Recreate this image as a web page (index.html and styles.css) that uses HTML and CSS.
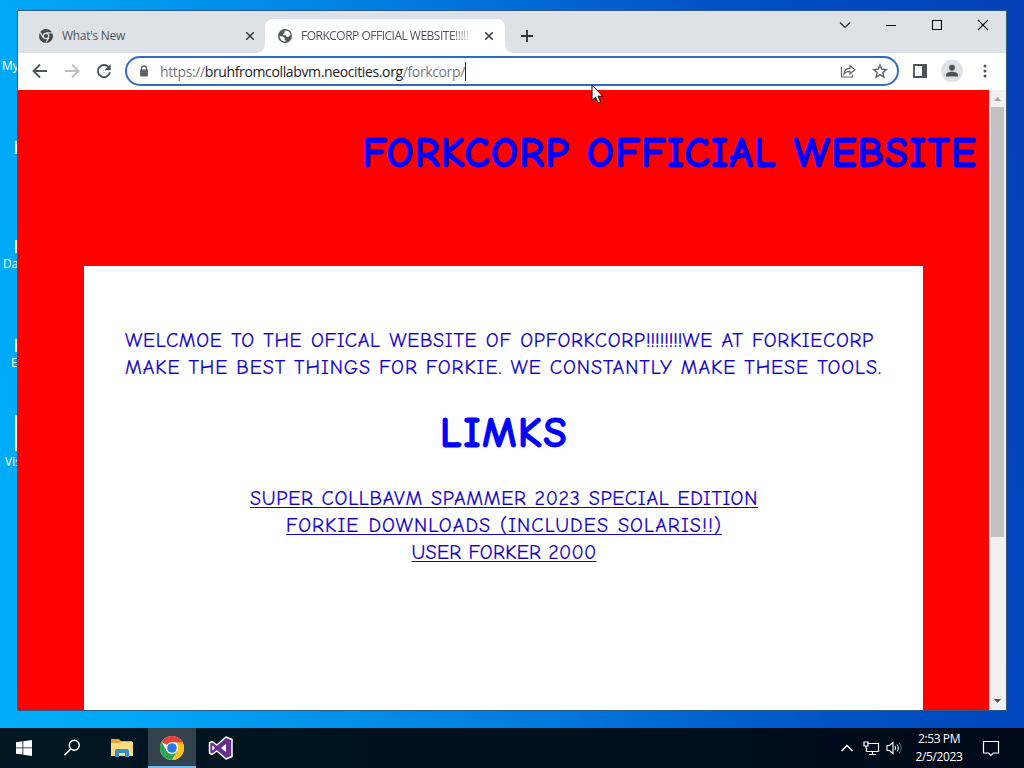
FILE: index.html
```html
<!DOCTYPE html>
<html lang="en">
<head>
    <meta charset="UTF-8">
    <meta name="viewport" content="width=device-width, initial-scale=1.0">
    <title>FORKCORP OFFICIAL WEBSITE</title>
    <link rel="stylesheet" href="styles.css">
</head>
<body>
    <div class="desktop">
        <!-- desktop shortcuts, mostly behind the window -->
        <span class="shortcut shortcut-my">My</span>
        <span class="shortcut shortcut-da">Da</span>
        <span class="shortcut shortcut-e">E</span>
        <span class="shortcut shortcut-vis">Vis</span>
        <i class="arrow arrow-1"></i>
        <i class="arrow arrow-2"></i>
        <i class="arrow arrow-3"></i>
        <i class="arrow arrow-4"></i>

        <div class="window">
            <div class="titlebar">
                <div class="tab">
                    <svg class="favicon" width="14" height="14" viewBox="0 0 14 14">
                        <circle cx="7" cy="7" r="7" fill="#45494d"/>
                        <circle cx="7" cy="7" r="2.7" fill="#45494d" stroke="#dee1e6" stroke-width="1.2"/>
                        <path d="M7 3.8h6.2M4.2 8.6L1.2 3.4M9.8 8.6l-3 5.2" stroke="#dee1e6" stroke-width="1.2" fill="none"/>
                    </svg>
                    <span class="tab-title">What's New</span>
                    <svg width="10" height="10" viewBox="0 0 10 10"><path d="M1.2 1.2l7.6 7.6M8.8 1.2L1.2 8.8" stroke="#3c4043" stroke-width="1.6"/></svg>
                </div>
                <div class="tab active">
                    <svg class="favicon" width="14" height="14" viewBox="0 0 14 14">
                        <circle cx="7" cy="7" r="7" fill="#55595d"/>
                        <path d="M7.8 1.5L6.2 3l.4 1.3-1.8.6.3 1.4h2.6l.9 1.4 1.900.2.9-1.200 1.200-.2A5.500 5.500 0 0 0 7.800 1.500zM1.500 7.300l3.300.2 2 1.600-.3 1.400 1.200.9-.3 1.100A5.500 5.500 0 0 1 1.500 7.300z" fill="#fff"/>
                    </svg>
                    <span class="tab-title fade">FORKCORP OFFICIAL WEBSITE!!!!!</span>
                    <svg width="10" height="10" viewBox="0 0 10 10"><path d="M1.2 1.2l7.6 7.6M8.8 1.2L1.2 8.8" stroke="#3c4043" stroke-width="1.6"/></svg>
                </div>
                <svg class="new-tab" width="12" height="12" viewBox="0 0 12 12"><path d="M6 0v12M0 6h12" stroke="#2f3235" stroke-width="1.8"/></svg>
                <div class="controls">
                    <svg width="12" height="12" viewBox="0 0 12 12"><path d="M1 3.5l5 5 5-5" stroke="#222" stroke-width="1.1" fill="none"/></svg>
                    <svg width="12" height="12" viewBox="0 0 12 12"><path d="M1 6.5h10" stroke="#111" fill="none"/></svg>
                    <svg width="12" height="12" viewBox="0 0 12 12"><path d="M1.5 1.5h9v9h-9z" stroke="#111" stroke-width="1.1" fill="none"/></svg>
                    <svg width="12" height="12" viewBox="0 0 12 12"><path d="M1 1l10 10M11 1L1 11" stroke="#111" stroke-width="1.1" fill="none"/></svg>
                </div>
            </div>

            <div class="toolbar">
                <div class="nav">
                    <svg width="16" height="16" viewBox="0 0 16 16"><path d="M15 8H2M8 1.5L1.5 8 8 14.5" stroke="#4f5357" stroke-width="1.8" fill="none"/></svg>
                    <svg width="16" height="16" viewBox="0 0 16 16"><path d="M1 8h13M8 1.5L14.5 8 8 14.5" stroke="#bcbec1" stroke-width="1.8" fill="none"/></svg>
                    <svg width="16" height="16" viewBox="0 0 16 16"><path d="M13.3 5A6.1 6.1 0 1 0 14 9.3" stroke="#4f5357" stroke-width="1.9" fill="none"/><path d="M14.7 1v6.2H8.5z" fill="#4f5357"/></svg>
                </div>
                <div class="address">
                    <svg class="lock" width="10" height="12" viewBox="0 0 10 12"><path d="M2.5 5V3.5a2.5 2.5 0 0 1 5 0V5" stroke="#5f6368" stroke-width="1.3" fill="none"/><rect x="1" y="4.5" width="8" height="7" rx="1" fill="#5f6368"/></svg>
                    <span class="url">https://<b>bruhfromcollabvm.neocities.org</b>/forkcorp/</span>
                    <i class="caret"></i>
                    <svg class="share" width="16" height="14" viewBox="0 0 16 14"><path d="M1.5 3v10h11v-2.5M4 10c.2-4 2.2-5.7 6-5.8V1.5l4.8 4.3L10 10V7.3C7.3 7.2 5.5 8 4 10z" stroke="#5f6368" stroke-width="1.2" fill="none"/></svg>
                    <svg width="16" height="16" viewBox="0 0 16 16"><path d="M8 2l1.7 4.3 4.6.3-3.5 3 1.1 4.5L8 11.6l-3.9 2.5 1.1-4.5-3.5-3 4.6-.3z" stroke="#5f6368" stroke-width="1.4" fill="none"/></svg>
                </div>
                <svg class="panel" width="14" height="14" viewBox="0 0 14 14"><path d="M1 1h12v12H1z" stroke="#4f5357" stroke-width="1.8" fill="none"/><path d="M9 0h5v14H9z" fill="#4f5357"/></svg>
                <svg class="profile" width="22" height="22" viewBox="0 0 22 22"><circle cx="11" cy="11" r="11" fill="#dee1e6"/><circle cx="11" cy="7.7" r="3" fill="#4f5357"/><path d="M5 16.5v-1.5c0-2 3-3.2 6-3.2s6 1.2 6 3.2v1.5z" fill="#4f5357"/></svg>
                <svg width="4" height="14" viewBox="0 0 4 14" fill="#4f5357"><circle cx="2" cy="2" r="1.5"/><circle cx="2" cy="7" r="1.5"/><circle cx="2" cy="12" r="1.5"/></svg>
            </div>

            <div class="viewport">
                <div class="page">
                    <h1 class="site-title">FORKCORP OFFICIAL WEBSITE</h1>
                    <div class="content">
                        <p class="intro">
                            <span class="line line-1">WELCMOE TO THE OFICAL WEBSITE OF OPFORKCORP<span class="bangs">!!!!!!!!</span>WE AT FORKIECORP</span>
                            <span class="line line-2">MAKE THE BEST THINGS FOR FORKIE. WE CONSTANTLY MAKE THESE TOOLS.</span>
                        </p>
                        <h1 class="links-title">LIMKS</h1>
                        <div class="links">
                            <a class="line link-1" href="#">SUPER COLLBAVM SPAMMER 2023 SPECIAL EDITION</a>
                            <a class="line link-2" href="#">FORKIE DOWNLOADS (INCLUDES SOLARIS!!)</a>
                            <a class="line link-3" href="#">USER FORKER 2000</a>
                        </div>
                    </div>
                </div>
                <div class="scrollbar">
                    <svg width="17" height="17" viewBox="0 0 17 17"><path d="M5 11l3.5-4 3.5 4z" fill="#a3a3a3"/></svg>
                    <div class="thumb"></div>
                    <svg width="17" height="17" viewBox="0 0 17 17"><path d="M5 6l3.5 4L12 6z" fill="#505050"/></svg>
                </div>
            </div>
        </div>

        <svg class="cursor" width="13" height="20" viewBox="0 0 13 20"><path d="M1 1v15.5l3.6-3.4 2.6 5.7 2.4-1.1L7 12.2h4.8z" fill="#fff" stroke="#000"/></svg>

        <div class="taskbar">
            <div class="task start">
                <svg width="16" height="16" viewBox="0 0 16 16" fill="#fff"><path d="M0 2.2L6.5 1.3v6.2H0zM7.3 1.2L16 0v7.5H7.3zM0 8.3h6.5v6.2L0 13.7zM7.3 8.3H16V16l-8.7-1.2z"/></svg>
            </div>
            <div class="task search">
                <svg width="18" height="18" viewBox="0 0 18 18"><circle cx="11.3" cy="6.3" r="5" stroke="#fff" stroke-width="1.4" fill="none"/><path d="M7.7 9.9L1.5 16.2" stroke="#fff" stroke-width="1.5"/></svg>
            </div>
            <div class="task files">
                <svg width="22" height="18" viewBox="0 0 22 18"><path d="M0 0h8l2 2h11v3H0z" fill="#e3a82b"/><path d="M0 4h8l1.5-1H22v14H0z" fill="#fcdc7c"/><path d="M4 18v-6.5L5.5 10h11l1.5 1.5V18h-4v-4H8v4z" fill="#3b8fc9"/></svg>
            </div>
            <div class="task running">
                <svg width="24" height="24" viewBox="0 0 24 24"><circle cx="12" cy="12" r="12" fill="#fff"/><path d="M12 12L1.6 6A12 12 0 0 1 22.4 6H12z" fill="#ea4335"/><path d="M22.4 6A12 12 0 0 1 12 24l5.2-9V6z" fill="#fbc116"/><path d="M1.6 6A12 12 0 0 0 12 24l5.2-9H6.8z" fill="#30a350"/><path d="M12 6h10.4" stroke="#ea4335"/><circle cx="12" cy="12" r="6" fill="#fff"/><circle cx="12" cy="12" r="4.8" fill="#2878e8"/></svg>
            </div>
            <div class="task">
                <svg width="26" height="24" viewBox="0 0 26 24"><path d="M18 1l6 2.5v17L18 23l-9.2-8L4 18.5 1.5 17V7L4 5.5 8.8 9z" fill="#65308c" stroke="#fff" stroke-width="1.5" stroke-linejoin="round"/><path d="M18 8l-5 4 5 4zM4.3 9.2v5.6L7 12z" fill="#fff"/></svg>
            </div>

            <div class="tray">
                <svg width="14" height="14" viewBox="0 0 14 14"><path d="M1.5 10L7 4.5l5.5 5.5" stroke="#fff" stroke-width="1.4" fill="none"/></svg>
                <svg class="network" width="17" height="15" viewBox="0 0 17 15"><path d="M5.5 2.5h10v8h-12V7M9.5 10.5v3M6 13.5h7M1 1h4v4H1zM3 5v2.5" stroke="#fff" stroke-width="1.2" fill="none"/></svg>
                <svg class="volume" width="17" height="14" viewBox="0 0 17 14"><path d="M1 4.5h2.5L7 1.5v11l-3.5-3H1zM9 5q1.3 2 0 4M11 3.5q2.6 3.5 0 7" stroke="#fff" stroke-width="1.1" fill="none"/><path d="M13.2 2q4 5 0 10" stroke="#66717c" fill="none"/></svg>
                <div class="clock">
                    <div>2:53 PM</div>
                    <div>2/5/2023</div>
                </div>
                <svg class="action" width="18" height="18" viewBox="0 0 18 18"><path d="M1.5 2.5h15v11.5H11.5L9 16.5 6.5 14h-5z" stroke="#fff" stroke-width="1.2" fill="none"/></svg>
            </div>
        </div>
    </div>
</body>
</html>
```
FILE: styles.css
```css
* {
    box-sizing: border-box;
}

body {
    margin: 0;
    font-family: "Open Sans", "Noto Sans", sans-serif;
}

svg {
    display: block;
    flex-shrink: 0;
}

.desktop {
    position: relative;
    width: 1024px;
    height: 768px;
    overflow: hidden;
    background: linear-gradient(80deg, #00aef8 0%, #00a6f5 14%, #007de0 45%, #0050c4 74%, #0540b8 100%);
}

.shortcut {
    position: absolute;
    font-size: 12px;
    line-height: 16px;
    color: #fff;
}

.shortcut-my {
    left: 2px;
    top: 58px;
}

.shortcut-da {
    left: 3px;
    top: 256px;
}

.shortcut-e {
    left: 11px;
    top: 355px;
}

.shortcut-vis {
    left: 5px;
    top: 454px;
}

.arrow {
    position: absolute;
    left: 15px;
    width: 2px;
    height: 13px;
    background: #fff;
}

.arrow-1 {
    top: 141px;
}

.arrow-2 {
    top: 240px;
}

.arrow-3 {
    top: 339px;
}

.arrow-4 {
    top: 415px;
    height: 36px;
}

.window {
    position: absolute;
    left: 17px;
    top: 10px;
    width: 990px;
    height: 701px;
    display: flex;
    flex-direction: column;
    border: 1px solid #2b5a86;
    background: #fff;
}

.titlebar {
    display: flex;
    height: 42px;
    padding-top: 8px;
    background: #dee1e6;
}

.tab {
    display: flex;
    align-items: center;
    width: 247px;
    padding: 0 10px 0 21px;
    font-size: 12px;
    color: #50555b;
}

.tab-title {
    flex: 1;
    margin: 0 10px 0 9px;
    padding-bottom: 1px;
    overflow: hidden;
    white-space: nowrap;
    letter-spacing: -0.3px;
}

.tab.active {
    position: relative;
    width: 240px;
    padding: 0 11px 0 13px;
    border-radius: 8px 8px 0 0;
    background: #fff;
}

.tab.active::before,
.tab.active::after {
    content: "";
    position: absolute;
    bottom: 0;
    width: 8px;
    height: 8px;
}

.tab.active::before {
    left: -8px;
    background: radial-gradient(circle at 0 0, transparent 7.5px, #fff 8px);
}

.tab.active::after {
    right: -8px;
    background: radial-gradient(circle at 100% 0, transparent 7.5px, #fff 8px);
}

.tab-title.fade {
    letter-spacing: -0.5px;
    mask-image: linear-gradient(to right, #000 150px, transparent 175px);
}

.new-tab {
    margin: 11px 0 0 16px;
}

.controls {
    display: flex;
    gap: 34px;
    margin: 0 17px 0 auto;
}

.toolbar {
    display: flex;
    align-items: center;
    height: 37px;
    padding: 0 19px 1px 14px;
    background: #fff;
}

.nav {
    display: flex;
    gap: 16px;
    margin-right: 13px;
}

.address {
    display: flex;
    align-items: center;
    width: 774px;
    height: 30px;
    padding: 0 9px 0 12px;
    border: 2px solid #2f6bc4;
    border-radius: 15px;
}

.url {
    margin-left: 11px;
    font-size: 14px;
    letter-spacing: -0.37px;
    white-space: nowrap;
    color: #75797e;
}

.url b {
    font-weight: normal;
    color: #202124;
}

.caret {
    width: 1px;
    height: 19px;
    background: #222;
}

.share {
    margin: 0 16px 0 auto;
}

.panel {
    margin-left: 14px;
}

.profile {
    margin: 0 auto 0 14px;
}

.viewport {
    display: flex;
    flex: 1;
    min-height: 0;
}

.page {
    width: 971px;
    overflow: hidden;
    background: #f00;
    color: #00f;
    font-family: "Comic Sans MS", "Comic Neue", "DejaVu Sans", sans-serif;
}

.site-title {
    width: 615px;
    height: 176px;
    margin: 0 12px 0 auto;
    padding-top: 33px;
    font-size: 43px;
    line-height: 60px;
    letter-spacing: 0.9px;
    white-space: nowrap;
    text-align: justify;
    text-align-last: justify;
    -webkit-text-stroke: 0.8px;
}

.content {
    width: 839px;
    height: 445px;
    margin-left: 66px;
    padding: 61px 40px 0 41px;
    background: #fff;
    font-size: 20px;
    line-height: 27px;
}

.intro {
    margin: 0;
    color: #1200c4;
}

.line {
    display: block;
    white-space: nowrap;
    text-align: justify;
    text-align-last: justify;
    letter-spacing: 0.7px;
    -webkit-text-stroke: 0.2px;
}

.line-1 {
    width: 749px;
}

.line-2 {
    width: 757px;
    letter-spacing: 0.95px;
}

.bangs {
    letter-spacing: -0.35px;
}

.links-title {
    margin: 22px 0;
    font-size: 43px;
    line-height: 60px;
    letter-spacing: 1.3px;
    text-align: center;
    -webkit-text-stroke: 0.8px;
}

.links {
    display: flex;
    flex-direction: column;
    align-items: center;
}

.links a {
    color: #1200c4;
    text-decoration-thickness: 1px;
    text-underline-offset: 2px;
}

.link-1 {
    width: 508px;
}

.link-2 {
    width: 436px;
    letter-spacing: 1.1px;
}

.link-3 {
    width: 185px;
    letter-spacing: 0.3px;
}

.scrollbar {
    display: flex;
    flex-direction: column;
    width: 17px;
    background: #f1f1f1;
}

.thumb {
    width: 13px;
    height: 430px;
    margin: 0 2px auto;
    background: #c1c1c1;
}

.cursor {
    position: absolute;
    left: 591px;
    top: 84px;
}

.taskbar {
    position: absolute;
    left: 0;
    bottom: 0;
    display: flex;
    width: 1024px;
    height: 40px;
    background: linear-gradient(to right, #001722, #00111f 50%, #000919);
}

.task {
    display: flex;
    align-items: center;
    justify-content: center;
    width: 49px;
}

.start {
    width: 48px;
}

.search {
    width: 48px;
}

.files {
    width: 52px;
}

.running {
    width: 48px;
    padding-top: 2px;
    border-bottom: 2px solid #76b9ed;
    background: #33434e;
}

.tray {
    display: flex;
    align-items: center;
    margin-left: auto;
    padding-right: 24px;
    color: #fff;
}

.network {
    margin-left: 9px;
}

.volume {
    margin-left: 6px;
}

.clock {
    width: 60px;
    margin-left: 6px;
    font-size: 12px;
    line-height: 18px;
    letter-spacing: -0.4px;
    text-align: center;
}

.action {
    margin-left: 13px;
}
```
